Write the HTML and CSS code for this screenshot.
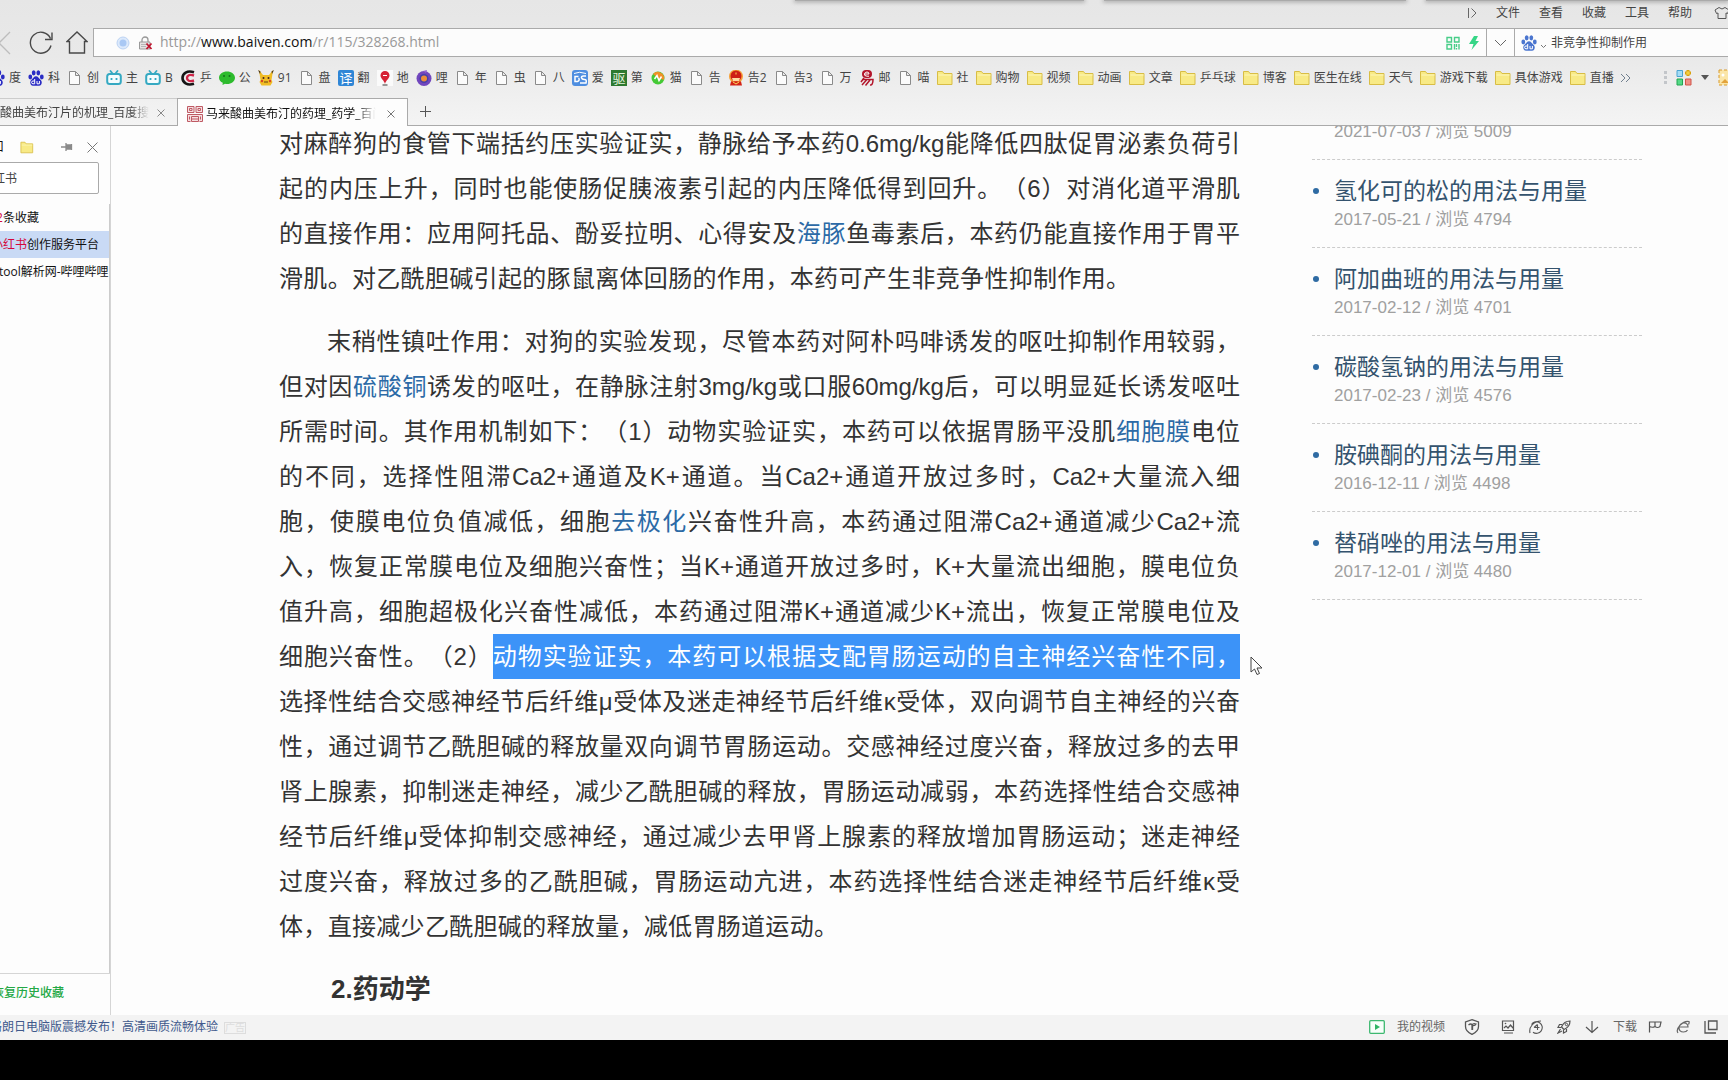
FILE: index.html
```html
<!DOCTYPE html>
<html lang="zh-CN">
<head>
<meta charset="utf-8">
<title>马来酸曲美布汀的药理_药学_百问</title>
<link rel="stylesheet" href="styles.css">
</head>
<body>
<svg class="defs" aria-hidden="true">
  <symbol id="page" viewBox="0 0 16 16"><path d="M2.500 1.500h6l4 4v9h-10zM8.500 1.500v4h4" fill="#fbfbfb" stroke="#8a8a8a"/></symbol>
  <symbol id="folder" viewBox="0 0 16 16"><path d="M.5 14.500v-13h5l1.500 2h8v11z" fill="#f8ea86" stroke="#d8bd45"/><path d="M1.500 5h13" stroke="#fdf6b8"/></symbol>
  <symbol id="paw" viewBox="0 0 16 16"><ellipse cx="2.300" cy="7" rx="1.900" ry="2.400"/><ellipse cx="5.700" cy="2.800" rx="1.900" ry="2.600"/><ellipse cx="10.300" cy="2.800" rx="1.900" ry="2.600"/><ellipse cx="13.800" cy="7" rx="1.900" ry="2.400"/><path d="M8 6.200c2 0 2.800 2 4.300 3.400 1.700 1.500 1.800 3.300.9 4.900-1.300 2-3.300 1.200-5.200 1.200s-3.900.8-5.200-1.200c-.9-1.600-.8-3.400.9-4.900C5.200 8.200 6 6.200 8 6.200z"/><path d="M6.700 9v4.800H5a1.200 1.200 0 0 1 0-2.800h1.700M9 11v2.800h2.400V11" fill="none" stroke="#fff"/></symbol>
  <symbol id="tv" viewBox="0 0 16 16"><path d="M4.500 1l2 2.500M11.500 1l-2 2.500" stroke="#35a9c2" stroke-width="1.800" stroke-linecap="round"/><rect x="1.200" y="4" width="13.600" height="10" rx="2.500" fill="#f5fcfd" stroke="#35a9c2" stroke-width="2"/><path d="M5.500 8v2M10.500 8v2" stroke="#35a9c2" stroke-width="1.800"/></symbol>
</svg>

<header class="chrome">
  <div class="shades"><i></i><i></i><i></i></div>
  <nav class="menu">
    <button class="icon-btn" aria-label="展开"><svg width="10" height="12" viewBox="0 0 10 12"><path d="M1.500 1v10M4.500 1.500L9 6l-4.500 4.500" fill="none" stroke="#666"/></svg></button>
    <button>文件</button><button>查看</button><button>收藏</button><button>工具</button><button>帮助</button>
    <button class="icon-btn skin" aria-label="皮肤"><svg width="16" height="14" viewBox="0 0 16 14"><path d="M5 1.500L1 4l1.500 3.500L4 7v5.500h8V7l1.500.5L15 4l-4-2.500Q8 4.500 5 1.500z" fill="none" stroke="#555"/></svg></button>
  </nav>

  <div class="address-row">
    <div class="nav-buttons">
      <button class="icon-btn" aria-label="后退"><svg width="12" height="24" viewBox="0 0 12 24"><path d="M10 1L-1 12l11 11" fill="none" stroke="#bdbdbd" stroke-width="1.300"/></svg></button>
      <button class="icon-btn reload" aria-label="刷新"><svg width="26" height="24" viewBox="0 0 26 24"><path d="M22.500 7.500A10.500 10.500 0 1 0 23 14.500M24 1.500v7h-7" fill="none" stroke="#484848" stroke-width="1.400"/></svg></button>
      <button class="icon-btn" aria-label="主页"><svg width="22" height="24" viewBox="0 0 22 24"><path d="M3.500 10.500H1L11 1l10 9.500h-2.500v11.500h-15z" fill="none" stroke="#484848" stroke-width="1.400"/></svg></button>
    </div>
    <div class="address">
      <svg width="14" height="14" viewBox="0 0 14 14"><circle cx="7" cy="7" r="6" fill="#dce9fb" stroke="#bcd3f3"/><circle cx="7" cy="7" r="3.500" fill="#a9c8f4"/></svg>
      <svg class="lock" width="16" height="14" viewBox="0 0 16 14"><path d="M4 6V4a3 3 0 0 1 6 0v2" fill="none" stroke="#999" stroke-width="1.300"/><path d="M1.500 6h10.500v7H1.500z" fill="#e7e3e3" stroke="#999"/><path d="M3 8.500h6M3 10.500h5" stroke="#b5b5b5"/><path d="M8.500 7.500l5 5.500M13.500 7.500l-5 5.500" stroke="#c0152f" stroke-width="1.800"/></svg>
      <div class="url" role="textbox" aria-label="地址" contenteditable="true" spellcheck="false">http://<b>www.baiven.com</b>/r/115/328268.html</div>
      <button class="icon-btn" aria-label="二维码"><svg width="14" height="14" viewBox="0 0 14 14"><path d="M1 1.500h4.500V6H1zM8.500 1.500H13V6H8.500zM1 8.500h4.500V13H1zM8.500 8v5.500M10.500 8v3M13 8v5.500M10.500 12v1.500" fill="none" stroke="#47cd88" stroke-width="1.400"/></svg></button>
      <button class="icon-btn bolt" aria-label="极速模式"><svg width="10" height="14" viewBox="0 0 10 14"><path d="M5 0h4L6.500 5H10L2.500 14l2-6H0z" fill="#35d686"/></svg></button>
    </div>
    <button class="icon-btn drop" aria-label="历史地址"><svg width="13" height="8" viewBox="0 0 13 8"><path d="M1 1l5.500 5.500L12 1" fill="none" stroke="#666"/></svg></button>
    <form class="search">
      <svg width="16" height="16" fill="#4a75cf"><use href="#paw"/></svg>
      <svg class="tick" width="7" height="5" viewBox="0 0 7 5"><path d="M1 1l2.500 2.500L6 1" fill="none" stroke="#777"/></svg>
      <input type="text" aria-label="搜索" value="非竞争性抑制作用">
    </form>
  </div>

  <div class="bookmark-row">
    <nav class="bookmarks">
      <a href="#"><svg fill="#2a2cc4"><use href="#paw"/></svg>度</a>
      <a href="#"><svg fill="#2a2cc4"><use href="#paw"/></svg>科</a>
      <a href="#"><svg><use href="#page"/></svg>创</a>
      <a href="#"><svg><use href="#tv"/></svg>主</a>
      <a href="#"><svg><use href="#tv"/></svg>B</a>
      <a href="#"><svg viewBox="0 0 16 16"><path d="M14 2.200C7 0 2.500 3.500 2.500 8S7 16 14 13.800" fill="none" stroke="#151515" stroke-width="2.600"/><path d="M14 5.500C9.500 4 7 5.500 7 8s2.500 4 7 2.500" fill="none" stroke="#cf2447" stroke-width="2.400"/></svg>乒</a>
      <a href="#"><svg viewBox="0 0 16 16"><path d="M8 1.500c4.400 0 8 2.700 8 6.200S12.400 14 8 14q-1 0-2-.2L3.500 15l.3-2.200C1.500 11.700 0 9.800 0 7.700 0 4.200 3.600 1.500 8 1.500z" fill="#2dbb2d"/><circle cx="5" cy="6" r="1" fill="#14701b"/><circle cx="10.500" cy="6" r="1" fill="#14701b"/></svg>公</a>
      <a href="#"><svg viewBox="0 0 16 16"><path d="M1 0l4 5h6l4-5-1 7-.5 3 1 2-2 3.500h-9L1.500 12l1-2L2 7z" fill="#f0bc24"/><path d="M0 0l2.500 1.500L2 4zM16 0l-2.500 1.500.5 2.500z" fill="#4a3517"/><circle cx="5.500" cy="8" r="1" fill="#422"/><circle cx="10.500" cy="8" r="1" fill="#422"/><circle cx="4" cy="11" r="1.200" fill="#d84324"/><circle cx="12" cy="11" r="1.200" fill="#d84324"/><path d="M6 12h4" stroke="#63420f"/></svg>91</a>
      <a href="#"><svg><use href="#page"/></svg>盘</a>
      <a href="#"><svg viewBox="0 0 16 16"><rect width="16" height="16" rx="2" fill="#2f86d6"/><text x="8" y="13" text-anchor="middle" font-size="13" fill="#fff">译</text></svg>翻</a>
      <a href="#"><svg viewBox="0 0 16 16"><rect width="16" height="16" fill="#fafafa"/><path d="M8 1a4.500 4.500 0 0 1 4.500 4.500C12.500 8.500 9 10 8 14 7 10 3.500 8.500 3.500 5.500A4.500 4.500 0 0 1 8 1z" fill="#d62134"/><path d="M6 5.500h4" stroke="#fff"/><path d="M5.500 15h5" stroke="#333"/></svg>地</a>
      <a href="#"><svg viewBox="0 0 16 16"><circle cx="8" cy="8.500" r="7.500" fill="#7146bd"/><circle cx="8" cy="8.500" r="4.500" fill="#453fa8"/><circle cx="8" cy="8.500" r="3" fill="#ec8d3a"/><path d="M7 1l4-1-1 3z" fill="#9361cf"/></svg>哩</a>
      <a href="#"><svg><use href="#page"/></svg>年</a>
      <a href="#"><svg><use href="#page"/></svg>虫</a>
      <a href="#"><svg><use href="#page"/></svg>八</a>
      <a href="#"><svg viewBox="0 0 16 16"><rect width="16" height="16" rx="3" fill="#4e8ee0"/><path d="M2 3.500q5-2.500 12 0" fill="none" stroke="#fff"/><path d="M6.500 6.500H3v5h2.500a2 2 0 0 0 1-3.500M14 6h-2.500q-2.500 0-2 1.800t3 1.700 1.500 3.500H8" fill="none" stroke="#fff" stroke-width="1.500"/></svg>爱</a>
      <a href="#"><svg viewBox="0 0 16 16"><rect width="16" height="16" fill="#2d7930"/><text x="8" y="13" text-anchor="middle" font-size="13" fill="#e5f3df">驱</text></svg>第</a>
      <a href="#"><svg viewBox="0 0 16 16"><circle cx="8" cy="8" r="6.500" fill="#44c935"/><path d="M3 4a6.500 6.500 0 0 1 11 6L8 8z" fill="#f09127"/><path d="M4.500 9L7 5.500l2 5 2.500-4" fill="none" stroke="#fff" stroke-width="1.500"/></svg>猫</a>
      <a href="#"><svg><use href="#page"/></svg>告</a>
      <a href="#"><svg viewBox="0 0 16 16"><circle cx="8" cy="6.500" r="7" fill="#f5a13a"/><circle cx="8" cy="6" r="5.500" fill="#ce1d16"/><path d="M4 8h8l-1 3H5z" fill="#ffd9a0"/><path d="M3 11.500h10l1 4H2z" fill="#d42317"/><path d="M5 12l3 2 3-2M8 2.500v2" stroke="#ffd65b" fill="none"/></svg>告2</a>
      <a href="#"><svg><use href="#page"/></svg>告3</a>
      <a href="#"><svg><use href="#page"/></svg>万</a>
      <a href="#"><svg viewBox="0 0 16 16"><rect x="3" width="10" height="8" rx="4" fill="#b3152b"/><path d="M5.500 4H10q0-2-2-2T5.500 4 8 6.200h2" fill="none" stroke="#fff"/><path d="M5 8L2 12M3 9.500h11q0 6-3 5.500M7.500 10L3 15M11 10l-4.500 5.500" fill="none" stroke="#b3152b" stroke-width="1.500"/></svg>邮</a>
      <a href="#"><svg><use href="#page"/></svg>喵</a>
      <a href="#"><svg><use href="#folder"/></svg>社</a>
      <a href="#"><svg><use href="#folder"/></svg>购物</a>
      <a href="#"><svg><use href="#folder"/></svg>视频</a>
      <a href="#"><svg><use href="#folder"/></svg>动画</a>
      <a href="#"><svg><use href="#folder"/></svg>文章</a>
      <a href="#"><svg><use href="#folder"/></svg>乒乓球</a>
      <a href="#"><svg><use href="#folder"/></svg>博客</a>
      <a href="#"><svg><use href="#folder"/></svg>医生在线</a>
      <a href="#"><svg><use href="#folder"/></svg>天气</a>
      <a href="#"><svg><use href="#folder"/></svg>游戏下载</a>
      <a href="#"><svg><use href="#folder"/></svg>具体游戏</a>
      <a href="#"><svg><use href="#folder"/></svg>直播</a>
      <button class="icon-btn" aria-label="更多收藏"><svg viewBox="0 0 16 16"><path d="M0 4l4 4-4 4M5 4l4 4-4 4" fill="none" stroke="#71808f"/></svg></button>
    </nav>
    <div class="extensions">
      <svg width="3" height="14" viewBox="0 0 3 14"><path d="M0 1.500h3M0 6.500h3M0 11.500h3" stroke="#c3c6ca" stroke-width="3"/></svg>
      <button class="icon-btn" aria-label="扩展"><svg width="16" height="17" viewBox="0 0 16 17"><path d="M1 1.500h5.500v6H1z" fill="#a5dcf5" stroke="#4ba4d2"/><path d="M1 10h5.500v6H1z" fill="#55d987" stroke="#23a650"/><path d="M9.500 10H15v6H9.500z" fill="#f09087" stroke="#d05549"/><path d="M12 1v6M9 4h6" stroke="#d9a20e" stroke-width="3"/><path d="M12 2v4M10 4h4" stroke="#fbdf55"/></svg></button>
      <svg width="8" height="5" viewBox="0 0 8 5"><path d="M0 0h8L4 5z" fill="#555"/></svg>
      <button class="icon-btn" aria-label="截图"><svg width="16" height="17" viewBox="0 0 16 17"><path d="M1 1h14v15H1z" fill="#fbe6a8" stroke="#d99a2c" stroke-dasharray="3 2"/><circle cx="5" cy="6" r="1.500" fill="#fff"/><path d="M3 14l4-4 3 3 5-6v7z" fill="#e3a33d"/></svg></button>
    </div>
  </div>

  <div class="tabs" role="tablist">
    <div class="tab" role="tab"><span>酸曲美布汀片的机理_百度搜索</span><button class="icon-btn" aria-label="关闭标签"><svg width="8" height="8" viewBox="0 0 8 8"><path d="M.5.5l7 7M7.500.5l-7 7" stroke="#888"/></svg></button></div>
    <div class="tab active" role="tab" aria-selected="true"><svg width="16" height="16" viewBox="0 0 16 16"><path d="M.5.5h6.500v6H.5zM9 .5h6.500v6H9zM.5 15.500V8.500h15v7h-3M.5 15.500h3M4.500 10.500h7v5h-7zM4.500 13h7M2.500 2.500h2.500v2H2.500zM11 2.500h2.500v2H11zM2.500 10.500v3M13.500 10.500v3" fill="#f6dfe1" stroke="#bf5a64"/></svg><span>马来酸曲美布汀的药理_药学_百问</span><button class="icon-btn" aria-label="关闭标签"><svg width="8" height="8" viewBox="0 0 8 8"><path d="M.5.5l7 7M7.500.5l-7 7" stroke="#777"/></svg></button></div>
    <button class="icon-btn new-tab" aria-label="新建标签"><svg width="11" height="11" viewBox="0 0 11 11"><path d="M5.500 0v11M0 5.500h11" stroke="#555"/></svg></button>
  </div>
</header>

<div class="viewport">
  <aside class="favorites">
    <div class="fav-head">
      <span>窗口</span>
      <svg class="fav-folder" width="14" height="13"><use href="#folder"/></svg>
      <button class="icon-btn" aria-label="固定"><svg width="12" height="10" viewBox="0 0 12 10"><path d="M0 5h5M5 1v8M5 3h5v4H5zM10.500 2v6" stroke="#8a8a8a" stroke-width="1.300" fill="#8a8a8a"/></svg></button>
      <button class="icon-btn" aria-label="关闭"><svg width="11" height="11" viewBox="0 0 11 11"><path d="M.5.5l10 10M10.500.5l-10 10" stroke="#777"/></svg></button>
    </div>
    <input type="text" aria-label="搜索收藏" value="小红书">
    <ul>
      <li class="count">找到<em>2</em>条收藏</li>
      <li class="current"><em>小红书</em>创作服务平台</li>
      <li class="wide">tool解析网-哔哩哔哩</li>
    </ul>
    <a class="restore" href="#">恢复历史收藏</a>
  </aside>

  <main class="page">
    <article>
      <p>
        <span>对麻醉狗的食管下端括约压实验证实，静脉给予本药0.6mg/kg能降低四肽促胃泌素负荷引</span>
        <span>起的内压上升，同时也能使肠促胰液素引起的内压降低得到回升。（6）对消化道平滑肌</span>
        <span>的直接作用：应用阿托品、酚妥拉明、心得安及<a href="#">海豚</a>鱼毒素后，本药仍能直接作用于胃平</span>
        <span class="end-long">滑肌。对乙酰胆碱引起的豚鼠离体回肠的作用，本药可产生非竞争性抑制作用。</span>
      </p>
      <p>
        <span class="indent">末稍性镇吐作用：对狗的实验发现，尽管本药对阿朴吗啡诱发的呕吐抑制作用较弱，</span>
        <span>但对因<a href="#">硫酸铜</a>诱发的呕吐，在静脉注射3mg/kg或口服60mg/kg后，可以明显延长诱发呕吐</span>
        <span>所需时间。其作用机制如下：（1）动物实验证实，本药可以依据胃肠平没肌<a href="#">细胞膜</a>电位</span>
        <span>的不同，选择性阻滞Ca2+通道及K+通道。当Ca2+通道开放过多时，Ca2+大量流入细</span>
        <span>胞，使膜电位负值减低，细胞<a href="#">去极化</a>兴奋性升高，本药通过阻滞Ca2+通道减少Ca2+流</span>
        <span>入，恢复正常膜电位及细胞兴奋性；当K+通道开放过多时，K+大量流出细胞，膜电位负</span>
        <span>值升高，细胞超极化兴奋性减低，本药通过阻滞K+通道减少K+流出，恢复正常膜电位及</span>
        <span>细胞兴奋性。（2）<mark>动物实验证实，本药可以根据支配胃肠运动的自主神经兴奋性不同，</mark></span>
        <span>选择性结合交感神经节后纤维μ受体及迷走神经节后纤维κ受体，双向调节自主神经的兴奋</span>
        <span>性，通过调节乙酰胆碱的释放量双向调节胃肠运动。交感神经过度兴奋，释放过多的去甲</span>
        <span>肾上腺素，抑制迷走神经，减少乙酰胆碱的释放，胃肠运动减弱，本药选择性结合交感神</span>
        <span>经节后纤维μ受体抑制交感神经，通过减少去甲肾上腺素的释放增加胃肠运动；迷走神经</span>
        <span>过度兴奋，释放过多的乙酰胆碱，胃肠运动亢进，本药选择性结合迷走神经节后纤维κ受</span>
        <span class="end-short">体，直接减少乙酰胆碱的释放量，减低胃肠道运动。</span>
      </p>
      <h2>2.药动学</h2>
    </article>
    <ul class="related">
      <li><small>2021-07-03 / 浏览 5009</small></li>
      <li><a href="#">氢化可的松的用法与用量</a><small>2017-05-21 / 浏览 4794</small></li>
      <li><a href="#">阿加曲班的用法与用量</a><small>2017-02-12 / 浏览 4701</small></li>
      <li><a href="#">碳酸氢钠的用法与用量</a><small>2017-02-23 / 浏览 4576</small></li>
      <li><a href="#">胺碘酮的用法与用量</a><small>2016-12-11 / 浏览 4498</small></li>
      <li><a href="#">替硝唑的用法与用量</a><small>2017-12-01 / 浏览 4480</small></li>
    </ul>
  </main>
</div>

<footer class="status">
  <a class="promo" href="#">格朗日电脑版震撼发布！高清画质流畅体验</a><span class="ad">广告</span>
  <div class="tools">
    <button class="video"><svg width="16" height="14" viewBox="0 0 16 14"><rect x=".7" y=".7" width="14.600" height="12.600" rx="1" fill="#f7fffa" stroke="#3db870" stroke-width="1.300"/><path d="M6 4l5 3-5 3z" fill="#2fb565"/></svg>我的视频</button>
    <button class="icon-btn shield" aria-label="安全"><svg width="16" height="16" viewBox="0 0 16 16"><path d="M8 .7l6.500 2.300v4.500q0 5-6.500 7.800Q1.500 12.500 1.500 7.500V3zM4.500 6Q7 4 8 6q1-2 4-1-1 2-3.500 1.500V11M8 6v5" fill="none" stroke="#555" stroke-width="1.300"/></svg></button>
    <button class="icon-btn" aria-label="图片"><svg width="14" height="14" viewBox="0 0 14 14"><path d="M1.500 1h11v9.500h-11zM3 13h9M3 8l2-2 2 2 2.500-3L12 8" fill="none" stroke="#555" stroke-width="1.200"/><circle cx="4.500" cy="3.500" r=".8" fill="#555"/></svg></button>
    <button class="icon-btn" aria-label="加速"><svg width="14" height="14" viewBox="0 0 14 14"><path d="M1 13C-.5 7 5 1 12 1M4 12.200A5.800 5.800 0 1 0 2.500 4.500M5 7.500h5.500M8.500 4.500V10M5 7.500l3.500-3" fill="none" stroke="#555" stroke-width="1.100"/></svg></button>
    <button class="icon-btn" aria-label="火箭"><svg width="14" height="14" viewBox="0 0 14 14"><path d="M13 1Q7 1 4.500 7L7 9.500Q13 7 13 1zM5 4.500H2.500L1 7.500h3M9.500 9v2.500l-3 1.500V10M3.500 9L1 13l4-2" fill="none" stroke="#555" stroke-width="1.200"/><circle cx="9.500" cy="4.500" r="1.200" fill="none" stroke="#555"/></svg></button>
    <button class="download"><svg width="14" height="14" viewBox="0 0 14 14"><path d="M7 1v11.500M1 7l6 5.500L13 7" fill="none" stroke="#555" stroke-width="1.200"/></svg>下载</button>
    <button class="icon-btn" aria-label="举报"><svg width="14" height="14" viewBox="0 0 14 14"><path d="M1.500 12.500V2h11.500l-1 4.500q-2.500 2-5 0-2.500 1.500-5.500 0M7 2v4.500" fill="none" stroke="#555" stroke-width="1.200"/></svg></button>
    <button class="icon-btn" aria-label="内核"><svg width="14" height="14" viewBox="0 0 14 14"><path d="M3.500 7H12Q12 3 8 3T3 7.500Q3 12 7.500 12q3 0 4-2M2 13C-1 9 7 0 13 1.500q.5 1-.5 3" fill="none" stroke="#666" stroke-width="1.200"/></svg></button>
    <button class="icon-btn" aria-label="窗口"><svg width="14" height="14" viewBox="0 0 14 14"><path d="M4.500 1H13v8.500H4.500zM1 1v12h11" fill="none" stroke="#555" stroke-width="1.300"/></svg></button>
  </div>
</footer>
<div class="letterbox"></div>
<svg class="cursor" width="14" height="20" viewBox="0 0 14 20" aria-hidden="true"><path d="M1 1v15l3.500-3 2.500 5.500 2.500-1-2.500-5.500h5z" fill="#fff" stroke="#444"/></svg>
</body>
</html>
```
FILE: styles.css
```css
* { box-sizing: border-box; }

body {
  margin: 0;
  height: 100vh;
  display: flex;
  flex-direction: column;
  overflow: hidden;
  background: #fdfdfd;
  color: #333;
  font: 12px/16px "Liberation Sans", "Noto Sans CJK SC", sans-serif;
  text-spacing-trim: space-all;
}

a { color: inherit; text-decoration: none; }
ul { margin: 0; padding: 0; list-style: none; }
em { font-style: normal; color: #d4083c; }
svg { display: block; flex: none; }
.defs { display: none; }

button {
  padding: 0;
  border: 0;
  background: none;
  color: inherit;
  font: inherit;
  display: flex;
  align-items: center;
  white-space: nowrap;
}

input { font: inherit; outline: 0; }

/* browser chrome */
.chrome {
  flex: none;
  background: linear-gradient(#e6e6e6, #e9e9e9 45%, #f4f4f4);
  font-family: "Open Sans", "Noto Sans CJK SC", sans-serif;
}

.shades {
  height: 0;
  display: grid;
  grid-template-columns: 290fr 302fr 303fr;
  gap: 20px;
  padding-left: 46%;
}
.shades i { height: 1px; background: #aaa; box-shadow: 0 0 4px 1px #999; }

.menu {
  height: 28px;
  padding: 0 0 2px;
  display: flex;
  justify-content: flex-end;
  align-items: center;
  gap: 19px;
  overflow: hidden;
  color: #444;
}
.skin { margin-right: -2px; margin-left: 3px; }

.address-row { height: 29px; display: flex; }
.nav-buttons {
  width: 93px;
  flex: none;
  display: flex;
  align-items: center;
  justify-content: space-between;
  padding-right: 5px;
}
.reload { margin-left: 3px; }
.address {
  flex: 1;
  display: flex;
  align-items: center;
  padding: 0 7px 0 22px;
  border: 1px solid #aaa;
  background: #fcfcfc;
}
.lock { margin-left: 8px; }
.url {
  flex: 1;
  margin-left: 6px;
  padding-bottom: 2px;
  font-size: 14px;
  line-height: 20px;
  color: #999;
  outline: 0;
}
.url b { font-weight: 400; color: #111; }
.bolt { margin-left: 9px; }
.drop {
  width: 27px;
  justify-content: center;
  border: solid #aaa;
  border-width: 1px 0;
  background: #fcfcfc;
}
.search {
  width: 214px;
  display: flex;
  align-items: center;
  padding-left: 6px;
  border: 1px solid #aaa;
  border-right: 0;
  background: #fcfcfc;
}
.tick { margin: 8px 4px 0 3px; }
.search input { flex: 1; min-width: 0; padding: 0; border: 0; background: none; color: #444; }

.bookmark-row {
  height: 41px;
  display: flex;
  align-items: center;
  justify-content: space-between;
  overflow: hidden;
  color: #444;
}
.bookmarks { display: flex; gap: 7px; margin-left: -11px; white-space: nowrap; }
.bookmarks a { display: flex; align-items: center; gap: 4px; }
.bookmarks svg { width: 16px; height: 16px; }
.extensions { display: flex; align-items: center; gap: 9px; margin-right: -6px; }

.tabs { height: 28px; display: flex; border-bottom: 1px solid #aaa; }
.tab {
  width: 177px;
  display: flex;
  align-items: center;
  padding: 2px 12px 0 0;
  border-top: 1px solid #ccc;
  color: #444;
}
.tab span {
  flex: 1;
  overflow: hidden;
  white-space: nowrap;
  margin-right: 8px;
  -webkit-mask-image: linear-gradient(90deg, #000 88%, transparent);
  mask-image: linear-gradient(90deg, #000 88%, transparent);
}
.active {
  width: 231px;
  gap: 3px;
  height: 28px;
  padding: 2px 12px 0 9px;
  border: 1px solid #aaa;
  border-bottom: 0;
  background: #fdfdfd;
  color: #111;
}
.new-tab { padding-left: 12px; }

/* favourites panel */
.viewport { flex: 1; min-height: 0; display: flex; overflow: hidden; }
.favorites {
  width: 149px;
  flex: none;
  margin-left: -38px;
  display: flex;
  flex-direction: column;
  border-right: 1px solid #d5d5d5;
  color: #111;
  white-space: nowrap;
  font-family: "Open Sans", "Noto Sans CJK SC", sans-serif;
}
.fav-head { height: 36px; display: flex; align-items: center; padding: 6px 12px 0 18px; }
.fav-folder { margin: 0 auto 0 16px; }
.fav-head button + button { margin-left: 14px; }
.favorites input {
  height: 32px;
  width: auto;
  margin: 0 11px 10px 0;
  padding: 0 0 0 18px;
  border: 1px solid #aaa;
  border-radius: 2px;
  background: #fff;
  color: #444;
}
.favorites ul { flex: 1; overflow: hidden; border-right: 1px solid #ccc; }
.favorites li { height: 27px; line-height: 27px; padding-left: 29px; }
.favorites .count { padding-left: 10px; }
.favorites .wide { padding-left: 37px; }
.favorites .current { background: #c9daf5; }
.restore {
  height: 42px;
  padding-left: 30px;
  border-top: 1px solid #d5d5d5;
  line-height: 38px;
  color: #24a845;
  font-weight: 500;
}

/* web page */
.page {
  flex: 1;
  display: flex;
  justify-content: space-between;
  padding: 0 86px 0 168px;
}
article { flex: 0 1 961px; padding-top: 3px; }
p, h2 { margin: -8px 0 26px; }
p { font-size: 24px; line-height: 45px; }
p span { display: block; white-space: nowrap; text-align-last: justify; }
p span a { color: #2c6aa6; }
p .indent { padding-left: 2em; }
p .end-long { padding-right: 110px; }
p .end-short { padding-right: 402px; }
mark { padding: 9px 0; background: #3c93f8; color: #fff; }
h2 { padding-left: 2em; font-size: 26px; line-height: 45px; }

.related { flex: 0 1 330px; margin-top: -6px; }
.related li {
  display: flex;
  flex-direction: column;
  padding: 14px 0 15px 22px;
  border-bottom: 1px dashed #ccc;
}
.related li:first-child { padding-top: 0; }
.related a {
  display: flex;
  align-items: center;
  margin-left: -21px;
  font-size: 23px;
  line-height: 34px;
  color: #34536e;
}
.related a::before {
  content: "";
  width: 6px;
  height: 6px;
  margin-right: 15px;
  border-radius: 50%;
  background: #2f6ba3;
}
.related small { font-size: 17px; line-height: 24px; color: #a0a0a0; }

/* status bar */
.status {
  flex: none;
  height: 25px;
  padding-bottom: 2px;
  display: flex;
  align-items: center;
  background: #f3f3f3;
  color: #666;
  overflow: hidden;
}
.promo { margin-left: -10px; color: #40598c; white-space: nowrap; }
.ad {
  margin: 2px auto 0 6px;
  width: 22px;
  border: 1px solid #ddd;
  font-size: 10px;
  line-height: 10px;
  text-align: center;
  color: #ddd;
}
.tools { display: flex; align-items: center; gap: 14px; padding-right: 10px; }
.video { gap: 12px; }
.shield { margin: 0 7px 0 5px; }
.download { gap: 14px; margin-right: -3px; }

.letterbox { flex: none; height: 40px; background: #000; }

.cursor { position: absolute; left: 1250px; top: 656px; }
```
